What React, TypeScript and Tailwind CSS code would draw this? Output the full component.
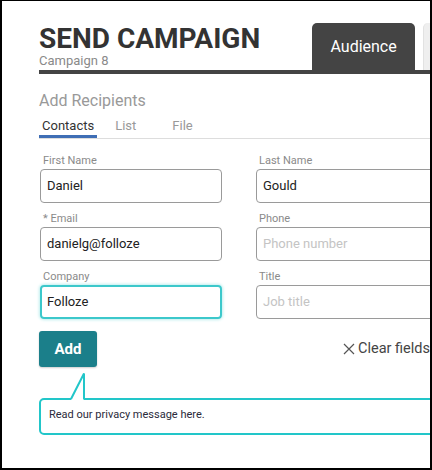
import React from "react";

function Field({ label, value, placeholder, focused }: { label: string; value?: string; placeholder?: string; focused?: boolean }) {
  return (
    <div className="flex flex-col w-[182px]">
      <div className="text-[11px] leading-[14px] text-[#8a8a8a] pl-[3px] mb-[1px]">{label}</div>
      <div
        className={
          focused
            ? "h-[34px] rounded-[4px] border-2 border-[#3cc8cb] shadow-[0_0_3px_1px_#bfeeee] flex items-center px-[5px]"
            : "h-[34px] rounded-[4px] border border-[#9a9a9a] flex items-center px-[6px]"
        }
      >
        {value ? (
          <span className="text-[13px] leading-[16px] text-[#222]">{value}</span>
        ) : (
          <span className="text-[13px] leading-[16px] text-[#c4c4c4]">{placeholder}</span>
        )}
      </div>
    </div>
  );
}

export default function App() {
  return (
    <div
      className="w-[432px] h-[470px] overflow-hidden bg-white border-black border-l-2 border-r-2 border-b-2 border-t"
      style={{ fontFamily: "Roboto, 'Noto Sans', sans-serif" }}
    >
      <div className="w-[520px] pl-[37px] pt-[22px]">
        <div className="flex items-end border-b-4 border-[#444]">
          <div className="w-[276px] pb-[3px]">
            <div className="text-[28px] leading-[30px] font-bold text-[#333] whitespace-nowrap">SEND CAMPAIGN</div>
            <div className="text-[13px] leading-[13px] text-[#8a8a8a]">Campaign 8</div>
          </div>
          <div className="w-[104px] h-[47px] bg-[#444] rounded-t-[5px] flex items-center justify-center text-white text-[16px] leading-[20px]">
            Audience
          </div>
          <div className="ml-[8px] w-[100px] h-[47px] bg-[#efefef] border-l border-[#e2e2e2] rounded-t-[5px]" />
        </div>

        <div className="mt-[17px] text-[16px] leading-[20px] text-[#999]">Add Recipients</div>

        <div className="mt-[7px] w-[400px] flex items-end border-b border-[#ddd] text-[13px] leading-[16px]">
          <div className="px-[3px] pb-[1px] border-b-[3px] border-[#3f6eb5] text-[#333]">Contacts</div>
          <div className="ml-[18px] pb-[4px] text-[#999]">List</div>
          <div className="ml-[36px] pb-[4px] text-[#999]">File</div>
        </div>

        <div className="mt-[15px] pl-[1px] w-[400px] grid grid-cols-[182px_182px] gap-x-[34px] gap-y-[9px]">
          <Field label="First Name" value="Daniel" />
          <Field label="Last Name" value="Gould" />
          <Field label="* Email" value="danielg@folloze" />
          <Field label="Phone" placeholder="Phone number" />
          <Field label="Company" value="Folloze" focused />
          <Field label="Title" placeholder="Job title" />
        </div>

        <div className="mt-[12px] w-[391px] flex items-center justify-between">
          <div className="w-[58px] h-[36px] rounded-[3px] bg-[#1b7f8a] shadow-[0_1px_2px_rgba(0,0,0,0.2)] flex items-center justify-center text-white font-bold text-[15px]">
            Add
          </div>
          <div className="flex items-center gap-[3px] text-[#444] text-[14.5px] leading-[18px]">
            <svg width="12" height="12" viewBox="0 0 12 12" fill="none" stroke="#555" strokeWidth="1.2">
              <path d="M1 1 L11 11 M11 1 L1 11" />
            </svg>
            <span>Clear fields</span>
          </div>
        </div>

        <div className="relative mt-[31px] w-[400px] h-[37px] rounded-[5px] border-2 border-[#22c6c9] pl-[8px] pt-[8px]">
          <svg className="absolute left-[29px] top-[-28px]" width="16" height="30" viewBox="0 0 16 30">
            <polygon points="1,28 14,2 14,28" fill="white" />
            <path d="M1 27 L14 1.5 L14 27.5" stroke="#22c6c9" strokeWidth="2" fill="none" />
          </svg>
          <div className="text-[11px] leading-[14px] text-[#2a2a3a]">Read our privacy message here.</div>
        </div>
      </div>
    </div>
  );
}
